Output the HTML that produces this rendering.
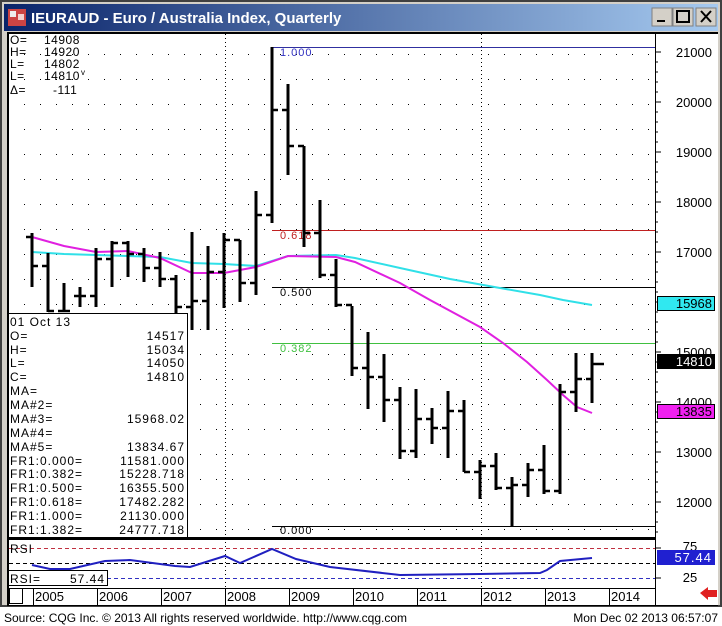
<!DOCTYPE html>
<html><head><meta charset="utf-8"><style>
html,body{margin:0;padding:0;width:722px;height:626px;overflow:hidden;background:#fff;}
svg{display:block}
text{font-family:"Liberation Sans",Arial,sans-serif;}
</style></head><body>
<svg width="722" height="626" viewBox="0 0 722 626" xmlns="http://www.w3.org/2000/svg">
<defs>
<linearGradient id="tb" x1="0" x2="1" y1="0" y2="0"><stop offset="0" stop-color="#0a246a"/><stop offset="1" stop-color="#a6caf0"/></linearGradient>
<pattern id="dots" x="0" y="4" width="16" height="25" patternUnits="userSpaceOnUse"><rect x="8" y="0" width="1" height="1" fill="#000"/></pattern>
</defs>
<rect x="0" y="0" width="722" height="626" fill="#fff"/>
<rect x="0" y="0" width="722" height="607" fill="#404040"/>
<rect x="2" y="2" width="718" height="603" fill="#d4d0c8"/>
<rect x="4" y="4" width="714" height="27" fill="url(#tb)"/>
<rect x="8" y="9" width="18" height="17" fill="#c44"/><rect x="10" y="11" width="6" height="6" fill="#eee"/><rect x="18" y="14" width="6" height="6" fill="#f4d0d0"/>
<text x="31" y="23" font-size="15" font-weight="bold" fill="#fff">IEURAUD - Euro / Australia Index, Quarterly</text>
<g stroke="#000" fill="#d4d0c8"><rect x="652" y="8" width="20" height="18" stroke="#808080"/><rect x="673" y="8" width="20" height="18" stroke="#808080"/><rect x="696" y="8" width="20" height="18" stroke="#808080"/></g>
<rect x="657" y="20" width="8" height="2" fill="#000"/>
<rect x="677" y="11" width="12" height="11" fill="none" stroke="#000" stroke-width="2"/>
<path d="M701 11L711 22M711 11L701 22" stroke="#000" stroke-width="2"/>
<rect x="7" y="32" width="711" height="574" fill="#000"/>
<rect x="9" y="34" width="709" height="571" fill="#fff"/>
<rect x="9" y="34" width="646" height="504" fill="url(#dots)"/>
<path d="M225.5 34V605M481.5 34V605" stroke="#000" stroke-dasharray="1 3"/>
<path d="M272 47.5H655" stroke="#3030a0"/>
<path d="M272 230.5H655" stroke="#c02020"/>
<path d="M272 287.5H655" stroke="#000"/>
<path d="M272 343.5H655" stroke="#40c040"/>
<path d="M272 526.5H655" stroke="#000"/>
<g font-size="11" letter-spacing="1">
<text x="280" y="56" fill="#3030c0">1.000</text>
<text x="280" y="239" fill="#c02020">0.618</text>
<text x="280" y="296" fill="#000">0.500</text>
<text x="280" y="352" fill="#40c040">0.382</text>
<text x="280" y="534" fill="#000">0.000</text>
</g>
<path d="M32 252 L64 254 L96 255 L160 257 L192 263 L224 264 L256 266 L288 256 L336 255 L355 258 L400 268 L450 279 L500 288 L540 295 L563 300 L592 305" fill="none" stroke="#30e0e8" stroke-width="2"/>
<path d="M32 237 L64 246 L96 252 L128 251 L160 258 L192 273 L224 273 L256 267 L288 256 L336 257 L355 262 L400 283 L430 300 L480 327 L503 343 L527 362 L547 380 L563 395 L577 407 L592 413" fill="none" stroke="#e020e0" stroke-width="2"/>
<path stroke="#000" stroke-width="3" fill="none" d="M32 233V287M48 253V312M64 283V312M80 287V307M96 248V307M112 241V287M128 241V277M144 248V282M160 252V287M176 275V313M192 232V330M208 246V330M224 233V308M240 240V302M256 191V295M272 47V223M288 84V175M304 146V247M320 200V278M336 259V307M352 306V376M368 332V409M384 354V422M400 387V459M416 389V458M432 408V444M448 391V458M464 400V472M480 460V499M496 453V490M512 477V526M528 463V497M544 445V494M560 384V494M576 353V412M592 353V403"/>
<path stroke="#000" stroke-width="2.5" fill="none" d="M26 237H32M32 266H38M42 266H48M48 311H54M58 311H64M64 311H70M74 296H80M80 296H86M90 296H96M96 259H102M106 259H112M112 243H118M122 243H128M128 254H134M138 254H144M144 268H150M154 268H160M160 279H166M170 279H176M176 307H182M186 307H192M192 301H198M202 301H208M208 272H214M218 272H224M224 240H230M234 240H240M240 283H246M250 283H256M256 215H262M266 215H272M272 110H278M282 110H288M288 146H294M298 146H304M304 233H310M314 233H320M320 275H326M330 275H336M336 305H342M346 305H352M352 368H358M362 368H368M368 377H374M378 377H384M384 400H390M394 400H400M400 451H406M410 451H416M416 419H422M426 419H432M432 428H438M442 428H448M448 411H454M458 411H464M464 472H470M474 472H480M480 466H486M490 466H496M496 488H502M506 488H512M512 485H518M522 485H528M528 470H534M538 470H544M544 491H550M554 491H560M560 392H566M570 392H576M576 379H582M586 379H592M592 364H604"/>
<g font-size="12" fill="#000" letter-spacing="0.5">
<text x="10" y="44">O=</text><text x="44" y="44">14908</text>
<text x="10" y="56">H=</text><text x="44" y="56">14920</text>
<text x="10" y="68">L=</text><text x="44" y="68">14802</text>
<text x="10" y="80">L=</text><text x="44" y="80">14810</text><text x="81" y="75" font-size="8">v</text>
<text x="10" y="94">Δ=</text><text x="53" y="94">-111</text>
</g>
<rect x="8.5" y="313.5" width="179" height="225" fill="#fff" stroke="#000"/>
<g font-size="12" fill="#000" letter-spacing="1">
<text x="10" y="326">01 Oct 13</text>
<text x="10" y="340">O=</text><text x="185" y="340" text-anchor="end">14517</text>
<text x="10" y="354">H=</text><text x="185" y="354" text-anchor="end">15034</text>
<text x="10" y="367">L=</text><text x="185" y="367" text-anchor="end">14050</text>
<text x="10" y="381">C=</text><text x="185" y="381" text-anchor="end">14810</text>
<text x="10" y="395">MA=</text>
<text x="10" y="409">MA#2=</text>
<text x="10" y="423">MA#3=</text><text x="185" y="423" text-anchor="end">15968.02</text>
<text x="10" y="437">MA#4=</text>
<text x="10" y="451">MA#5=</text><text x="185" y="451" text-anchor="end">13834.67</text>
<text x="10" y="465">FR1:0.000=</text><text x="185" y="465" text-anchor="end">11581.000</text>
<text x="10" y="478">FR1:0.382=</text><text x="185" y="478" text-anchor="end">15228.718</text>
<text x="10" y="492">FR1:0.500=</text><text x="185" y="492" text-anchor="end">16355.500</text>
<text x="10" y="506">FR1:0.618=</text><text x="185" y="506" text-anchor="end">17482.282</text>
<text x="10" y="520">FR1:1.000=</text><text x="185" y="520" text-anchor="end">21130.000</text>
<text x="10" y="534">FR1:1.382=</text><text x="185" y="534" text-anchor="end">24777.718</text>
</g>
<path d="M655.5 34V605" stroke="#000"/>
<path d="M655 538.5H9" stroke="#000" stroke-width="3"/>
<g stroke="#000"><path d="M655 52H661M655 102H661M655 152H661M655 202H661M655 252H661M655 302H661M655 352H661M655 402H661M655 452H661M655 502H661"/>
<path d="M655 62H658M655 72H658M655 82H658M655 92H658M655 112H658M655 122H658M655 132H658M655 142H658M655 162H658M655 172H658M655 182H658M655 192H658M655 212H658M655 222H658M655 232H658M655 242H658M655 262H658M655 272H658M655 282H658M655 292H658M655 312H658M655 322H658M655 332H658M655 342H658M655 362H658M655 372H658M655 382H658M655 392H658M655 412H658M655 422H658M655 432H658M655 442H658M655 462H658M655 472H658M655 482H658M655 492H658M655 512H658M655 522H658M655 532H658"/></g>
<g font-size="13" fill="#000" text-anchor="end">
<text x="712" y="57">21000</text><text x="712" y="107">20000</text><text x="712" y="157">19000</text><text x="712" y="207">18000</text><text x="712" y="257">17000</text><text x="712" y="357">15000</text><text x="712" y="407">14000</text><text x="712" y="457">13000</text><text x="712" y="507">12000</text>
</g>
<rect x="657.5" y="296.5" width="57" height="14" fill="#30e8f0" stroke="#000"/>
<text x="712" y="308" font-size="13" text-anchor="end" fill="#000">15968</text>
<rect x="657" y="354" width="58" height="15" fill="#000"/>
<text x="712" y="366" font-size="13" text-anchor="end" fill="#fff">14810</text>
<rect x="657.5" y="404.5" width="57" height="14" fill="#f020f0" stroke="#000"/>
<text x="712" y="416" font-size="13" text-anchor="end" fill="#000">13835</text>
<path d="M9 548.5H655" stroke="#c03040" stroke-dasharray="4 3"/>
<path d="M9 563.5H655" stroke="#000" stroke-dasharray="4 3"/>
<path d="M9 578.5H655" stroke="#3030c0" stroke-dasharray="4 3"/>
<path d="M32 565 L50 569 L70 569 L105 561 L130 560 L175 566 L190 567 L225 556 L240 563 L272 549 L296 559 L330 567 L400 575 L480 574 L540 573 L547 570 L560 561 L592 558" fill="none" stroke="#2020c0" stroke-width="2"/>
<text x="10" y="553" font-size="12" letter-spacing="1">RSI</text>
<rect x="8.5" y="570.5" width="99" height="15" fill="#fff" stroke="#000"/>
<text x="10" y="583" font-size="12" letter-spacing="1">RSI=</text><text x="105" y="583" font-size="12" letter-spacing="1" text-anchor="end">57.44</text>
<path d="M655 548H661M655 578H661" stroke="#000"/>
<text x="690" y="551" font-size="13" text-anchor="middle">75</text>
<rect x="657" y="550" width="58" height="15" fill="#2020d0"/>
<text x="712" y="562" font-size="13" text-anchor="end" fill="#fff" letter-spacing="1">57.44</text>
<text x="690" y="582" font-size="13" text-anchor="middle">25</text>
<path d="M9 588.5H655" stroke="#000"/>
<rect x="9.5" y="588.5" width="13" height="15" fill="#fff" stroke="#000"/>
<g stroke="#000"><path d="M33.5 588V605M97.5 588V605M161.5 588V605M225.5 588V605M289.5 588V605M353.5 588V605M417.5 588V605M481.5 588V605M545.5 588V605M609.5 588V605"/></g>
<g font-size="13" fill="#000">
<text x="35" y="601">2005</text><text x="99" y="601">2006</text><text x="163" y="601">2007</text><text x="227" y="601">2008</text><text x="291" y="601">2009</text><text x="355" y="601">2010</text><text x="419" y="601">2011</text><text x="483" y="601">2012</text><text x="547" y="601">2013</text><text x="611" y="601">2014</text>
</g>
<path d="M700 593L708 587V590H717V597H708V600Z" fill="#e02020"/>
<rect x="0" y="607" width="722" height="19" fill="#fff"/>
<text x="4" y="622" font-size="12" fill="#000">Source: CQG Inc. © 2013 All rights reserved worldwide. http://www.cqg.com</text>
<text x="718" y="622" font-size="12" fill="#000" text-anchor="end">Mon Dec 02 2013 06:57:07</text>
</svg>
</body></html>
